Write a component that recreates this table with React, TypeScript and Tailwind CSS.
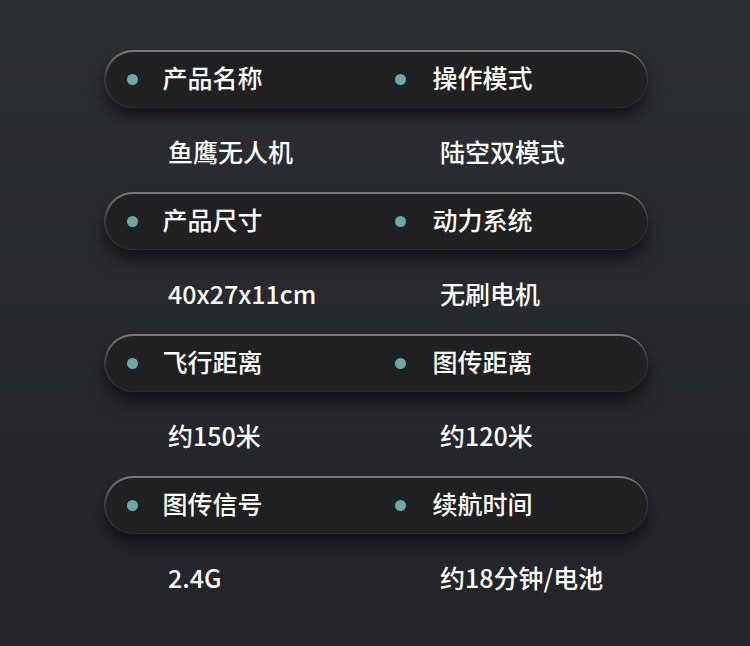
import React from "react";

const rows = [
  { a: "产品名称", b: "操作模式", va: "鱼鹰无人机", vb: "陆空双模式" },
  { a: "产品尺寸", b: "动力系统", va: "40x27x11cm", vb: "无刷电机" },
  { a: "飞行距离", b: "图传距离", va: "约150米", vb: "约120米" },
  { a: "图传信号", b: "续航时间", va: "2.4G", vb: "约18分钟/电池" },
];

function Dot() {
  return <span className="block w-[11px] h-[11px] rounded-full bg-[#6fa8a7] shrink-0" />;
}

export default function App() {
  return (
    <div
      className="w-[750px] h-[646px] overflow-hidden bg-gradient-to-b from-[#2b2e33] to-[#222429] text-white"
      style={{ fontFamily: '"Noto Sans CJK SC", "Noto Sans", sans-serif' }}
    >
      <div className="pt-[50px] pl-[104px] w-[648px] flex flex-col">
        {rows.map((r, i) => (
          <div key={i} className="flex flex-col">
            <div className="rounded-full p-[1.5px] bg-gradient-to-b from-[#7a7a7a] via-[#3a3b3d] to-[#2a2b2d] shadow-[0_10px_16px_rgba(0,0,0,0.55)]">
              <div className="h-[55px] rounded-full bg-[#1f2022] grid grid-cols-[268px_1fr] items-center pl-[21px]">
                <div className="flex items-center gap-[25px]">
                  <Dot />
                  <span className="text-[25px] leading-none font-medium -translate-y-[2px]">{r.a}</span>
                </div>
                <div className="flex items-center gap-[27px]">
                  <Dot />
                  <span className="text-[25px] leading-none font-medium -translate-y-[2px]">{r.b}</span>
                </div>
              </div>
            </div>
            <div className="h-[84px] pt-[28px] pl-[64px] grid grid-cols-[272px_1fr]">
              <span className="text-[25px] leading-[30px] font-medium">{r.va}</span>
              <span className="text-[25px] leading-[30px] font-medium">{r.vb}</span>
            </div>
          </div>
        ))}
      </div>
    </div>
  );
}
